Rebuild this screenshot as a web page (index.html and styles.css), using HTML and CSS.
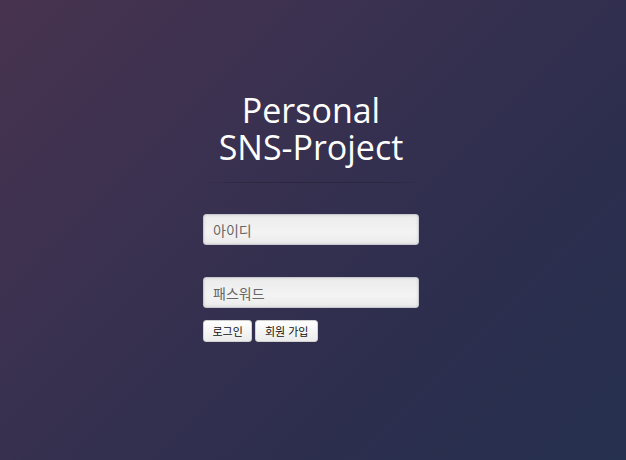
FILE: index.html
```html
<!DOCTYPE html>
<html lang="ko">
<head>
<meta charset="utf-8">
<title>Personal SNS-Project</title>
<link rel="stylesheet" href="styles.css">
</head>
<body>
<main class="page">
  <section class="login">
    <h1 class="title"><span class="title-line">Personal</span><span class="title-line">SNS-Project</span></h1>
    <div class="rule"></div>
    <form class="form">
      <input class="field" type="text" placeholder="아이디">
      <input class="field field-pw" type="password" placeholder="패스워드">
      <div class="actions">
        <button class="btn" type="button">로그인</button>
        <button class="btn" type="button">회원 가입</button>
      </div>
    </form>
  </section>
</main>
</body>
</html>
```
FILE: styles.css
```css
html, body {
  margin: 0;
  padding: 0;
  height: 100%;
}
body {
  background: linear-gradient(135deg, #47334f 0%, #3a3150 35%, #2e2e4e 65%, #26304f 100%);
  font-family: "Noto Sans CJK KR", "Liberation Sans", sans-serif;
}
.page {
  display: flex;
  justify-content: center;
  padding-top: 92px;
  padding-right: 4px;
}
.login {
  width: 216px;
  display: flex;
  flex-direction: column;
}
.title {
  margin: 0;
  display: flex;
  flex-direction: column;
  align-items: center;
  font-family: "Open Sans", sans-serif;
  font-weight: 400;
  font-size: 34px;
  color: #ffffff;
  white-space: nowrap;
}
.title-line {
  display: block;
  height: 37px;
  line-height: 37px;
}
.rule {
  height: 1px;
  margin: 16px 2px 0;
  background: linear-gradient(90deg, rgba(0,0,0,0.05), rgba(0,0,0,0.2) 20%, rgba(0,0,0,0.2) 80%, rgba(0,0,0,0.05));
}
.form {
  display: flex;
  flex-direction: column;
  margin-top: 31px;
}
.field {
  box-sizing: border-box;
  width: 216px;
  height: 31px;
  padding: 0 9px;
  border: 1px solid #c9c9d0;
  border-radius: 3px;
  background: linear-gradient(180deg, #ececec, #f3f3f3 60%, #ebebeb);
  box-shadow: inset 0 0 3px rgba(0,0,0,0.12);
  font-family: "Noto Sans CJK KR", sans-serif;
  font-size: 14px;
  color: #444;
  outline: none;
}
.field::placeholder {
  color: #666;
}
.field-pw {
  margin-top: 32px;
}
.actions {
  display: flex;
  gap: 3px;
  margin-top: 12px;
}
.btn {
  height: 22px;
  padding: 0 8.5px;
  border: 1px solid #d0d0d0;
  border-radius: 3px;
  background: linear-gradient(180deg, #ffffff, #ececec);
  font-family: "Noto Sans CJK KR", sans-serif;
  font-size: 11px;
  line-height: 20px;
  color: #111;
  cursor: pointer;
}
```
